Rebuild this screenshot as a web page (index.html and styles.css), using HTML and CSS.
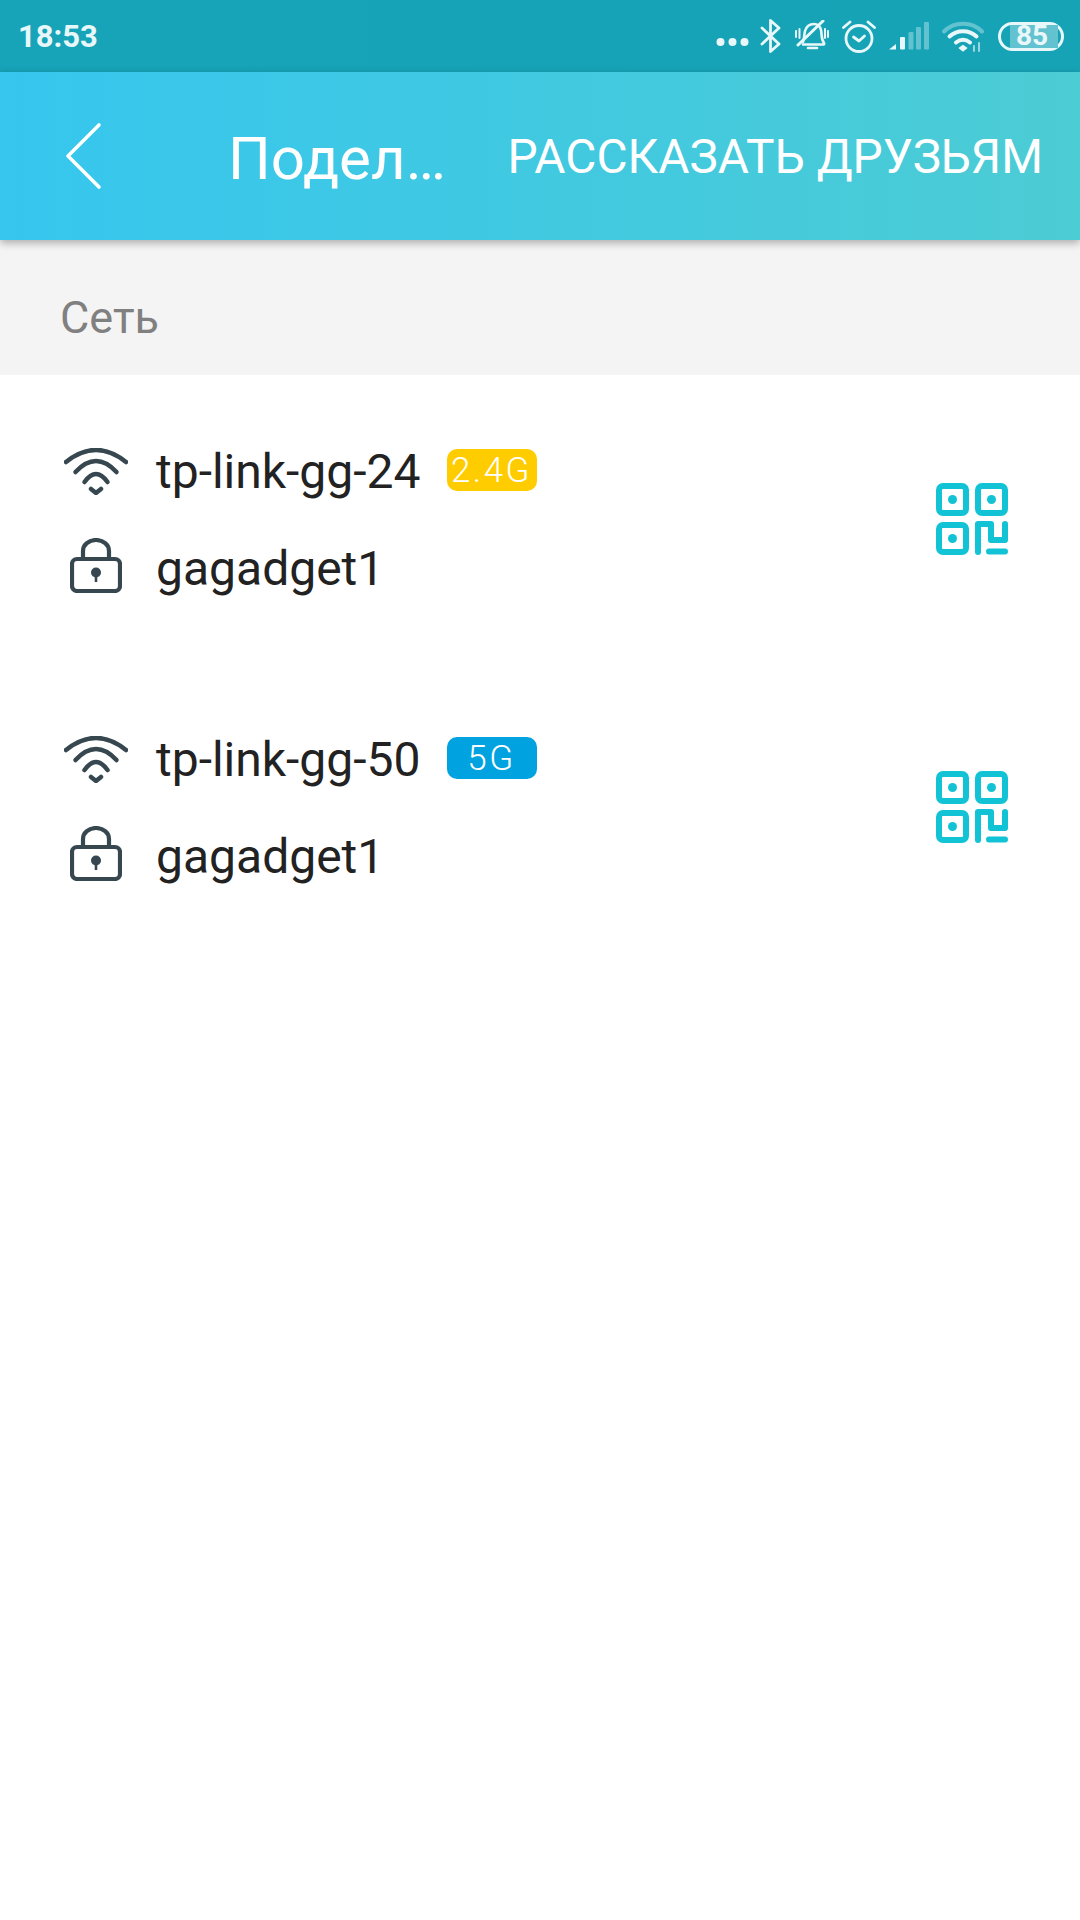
FILE: index.html
```html
<!DOCTYPE html>
<html lang="ru">
<head>
  <meta charset="UTF-8">
  <title>Поделиться</title>
  <link rel="stylesheet" href="styles.css">
</head>
<body>

<!-- Status bar -->
<div class="status-bar">
  <span class="clock">18:53</span>
  <div class="status-icons">
    <svg class="st-dots" width="33" height="10" viewBox="0 0 33 10"><circle cx="4.500" cy="5" r="4" fill="#e8f7f9"/><circle cx="16.500" cy="5" r="4" fill="#e8f7f9"/><circle cx="28.500" cy="5" r="4" fill="#e8f7f9"/></svg>
    <svg class="st-bt" width="21" height="34" viewBox="0 0 21 34" fill="none" stroke="#e8f7f9" stroke-width="2.800" stroke-linecap="round" stroke-linejoin="round"><path d="M2 9l17 16-8.500 7.500V1.500L19 9 2 25"/></svg>
    <svg class="st-bell" width="34" height="32" viewBox="0 0 34 32" fill="none" stroke="#e8f7f9" stroke-width="2.600" stroke-linecap="round"><path d="M8 22c1.500-3 1-7 2-11 1.500-5 5-7 9-7 3 0 6 2 7 6 1 5 0 9 3 13 .5 1 0 1.500-1 1.500H8"/><path d="M13 28h9"/><path d="M3 25L28 1" stroke-width="3"/><path d="M1 11v6M4.500 9v9M30 9v9M33 11v6" stroke-width="2"/></svg>
    <svg class="st-alarm" width="34" height="34" viewBox="0 0 34 34" fill="none" stroke="#e8f7f9" stroke-width="2.800" stroke-linecap="round" stroke-linejoin="round"><circle cx="17" cy="19.500" r="13"/><path d="M11.500 18l5.500 4 5.500-5"/><path d="M1.500 8.500L8 3M32.500 8.500L26 3"/></svg>
    <svg class="st-signal" width="40" height="28" viewBox="0 0 40 28"><path d="M0 27.500L7 22v5.500z" fill="#e8f7f9"/><rect x="11" y="15" width="5" height="12.500" rx="1" fill="#e8f7f9"/><rect x="19.500" y="10" width="5" height="17.500" rx="1" fill="#63c2d0"/><rect x="27" y="5" width="5" height="22.500" rx="1" fill="#63c2d0"/><rect x="35" y="0" width="5" height="27.500" rx="1" fill="#63c2d0"/></svg>
    <svg class="st-wifi" width="42" height="31" viewBox="0 0 42 31" fill="none" stroke-linecap="round"><path d="M2 10.500C12 0 30 0 40 10.500" stroke="#63c2d0" stroke-width="4"/><path d="M7.500 15.500c7.500-7 19.500-7 27 0" stroke="#e8f7f9" stroke-width="4"/><path d="M14 21.500c4.500-3.500 9.500-3.500 14 0" stroke="#e8f7f9" stroke-width="4"/><path d="M18 27l3-2 3 2-3 2.500z" fill="#e8f7f9" stroke="#e8f7f9" stroke-width="2"/><path d="M32 25v5M37 22v8" stroke="#9ad8e1" stroke-width="2"/></svg>
    <div class="battery"><div class="battery-fill"></div><span class="battery-num">85</span></div>
  </div>
</div>

<!-- Header -->
<div class="header">
  <svg class="back" width="38" height="68" viewBox="0 0 38 68" fill="none" stroke="#fff" stroke-width="3.600" stroke-linecap="round" stroke-linejoin="round"><path d="M34 3L3 34l31 31"/></svg>
  <div class="title">Подел…</div>
  <div class="action">РАССКАЗАТЬ ДРУЗЬЯМ</div>
</div>

<div class="section-label">Сеть</div>

<!-- Networks -->
<div class="network">
  <div class="net-info">
    <div class="net-line">
      <span class="net-icon">
        <svg class="icon-wifi" width="64" height="47" viewBox="0 0 64 47" fill="none" stroke="#37474f" stroke-width="4.500" stroke-linecap="round" stroke-linejoin="round"><path d="M2 14Q32 -10 62 14"/><path d="M11.500 24Q32 2 52.500 24"/><path d="M20.500 34Q32 18 43.500 34"/><path d="M27 41l5 4 5-4"/></svg>
      </span>
      <span class="net-name">tp-link-gg-24</span>
      <span class="badge badge-yellow">2.4G</span>
    </div>
    <div class="net-line">
      <span class="net-icon">
        <svg class="icon-lock" width="52" height="55" viewBox="0 0 52 55" fill="none" stroke="#37474f" stroke-width="4.200" stroke-linejoin="round"><path d="M13 21V13a13 11 0 0 1 26 0v8"/><rect x="2" y="21" width="48" height="32" rx="5"/><circle cx="26" cy="34.500" r="5" fill="#37474f" stroke="none"/><path d="M26 36v8" stroke-width="2.600"/></svg>
      </span>
      <span class="net-pass">gagadget1</span>
    </div>
  </div>
  <svg class="qr" width="74" height="74" viewBox="0 0 74 74" fill="none" stroke="#12c3d6" stroke-width="6" stroke-linecap="round" stroke-linejoin="round"><rect x="4" y="4" width="27" height="27" rx="4"/><rect x="43" y="4" width="27" height="27" rx="4"/><rect x="4" y="43" width="27" height="27" rx="4"/><circle cx="17.500" cy="17.500" r="4.500" fill="#12c3d6" stroke="none"/><circle cx="56.500" cy="17.500" r="4.500" fill="#12c3d6" stroke="none"/><circle cx="17.500" cy="56.500" r="4.500" fill="#12c3d6" stroke="none"/><path d="M43 70V42h13v16h14V42"/><path d="M54 69.500h16"/></svg>
</div>

<div class="network">
  <div class="net-info">
    <div class="net-line">
      <span class="net-icon">
        <svg class="icon-wifi" width="64" height="47" viewBox="0 0 64 47" fill="none" stroke="#37474f" stroke-width="4.500" stroke-linecap="round" stroke-linejoin="round"><path d="M2 14Q32 -10 62 14"/><path d="M11.500 24Q32 2 52.500 24"/><path d="M20.500 34Q32 18 43.500 34"/><path d="M27 41l5 4 5-4"/></svg>
      </span>
      <span class="net-name">tp-link-gg-50</span>
      <span class="badge badge-blue">5G</span>
    </div>
    <div class="net-line">
      <span class="net-icon">
        <svg class="icon-lock" width="52" height="55" viewBox="0 0 52 55" fill="none" stroke="#37474f" stroke-width="4.200" stroke-linejoin="round"><path d="M13 21V13a13 11 0 0 1 26 0v8"/><rect x="2" y="21" width="48" height="32" rx="5"/><circle cx="26" cy="34.500" r="5" fill="#37474f" stroke="none"/><path d="M26 36v8" stroke-width="2.600"/></svg>
      </span>
      <span class="net-pass">gagadget1</span>
    </div>
  </div>
  <svg class="qr" width="74" height="74" viewBox="0 0 74 74" fill="none" stroke="#12c3d6" stroke-width="6" stroke-linecap="round" stroke-linejoin="round"><rect x="4" y="4" width="27" height="27" rx="4"/><rect x="43" y="4" width="27" height="27" rx="4"/><rect x="4" y="43" width="27" height="27" rx="4"/><circle cx="17.500" cy="17.500" r="4.500" fill="#12c3d6" stroke="none"/><circle cx="56.500" cy="17.500" r="4.500" fill="#12c3d6" stroke="none"/><circle cx="17.500" cy="56.500" r="4.500" fill="#12c3d6" stroke="none"/><path d="M43 70V42h13v16h14V42"/><path d="M54 69.500h16"/></svg>
</div>

</body>
</html>
```

FILE: styles.css
```css
* {
  box-sizing: border-box;
}
body {
  font-family: Roboto, sans-serif;
  background: white;
  margin: 0;
  width: 1080px;
  height: 1920px;
  overflow: hidden;
}
.status-bar {
  height: 72px;
  background: linear-gradient(90deg, #17a3b8, #17a3b6);
  display: flex;
  align-items: center;
  justify-content: space-between;
  padding: 0 16px 0 18px;
}
.clock {
  color: #e8f7f9;
  font-size: 31px;
  font-weight: 700;
}
.status-icons {
  display: flex;
  align-items: center;
}
.status-icons svg {
  display: block;
  flex: none;
}
.st-dots { margin: 12px 11px 0 0; }
.st-bt { margin-right: 14px; }
.st-bell { margin-right: 13px; }
.st-alarm { margin-right: 13px; }
.st-signal { margin-right: 13px; }
.st-wifi { margin-right: 14px; }
.battery {
  position: relative;
  width: 66px;
  height: 29px;
  border: 3.500px solid #e8f7f9;
  border-radius: 15px;
}
.battery-fill {
  height: 100%;
  width: 48px;
  margin-left: 9px;
  background: #63c2d0;
}
.battery-num {
  position: absolute;
  top: -5px;
  left: 15px;
  color: #e8f7f9;
  font-size: 28px;
  font-weight: 700;
  line-height: 32px;
}
.header {
  height: 168px;
  background: linear-gradient(90deg, #36c6ee, #4cccd4);
  box-shadow: 0 3px 8px rgba(0,0,0,0.3);
  display: flex;
  align-items: center;
  padding-left: 65px;
  color: white;
  position: relative;
}
.title {
  font-size: 60px;
  margin-left: 125px;
  padding-top: 4px;
  white-space: nowrap;
}
.action {
  font-size: 47.800px;
  margin-left: auto;
  margin-right: 37px;
  padding-top: 2px;
  white-space: nowrap;
}
.section-label {
  height: 135px;
  background: #f4f4f4;
  color: #808080;
  font-size: 45px;
  display: flex;
  align-items: center;
  padding: 19px 0 0 60px;
}
.network {
  height: 288px;
  display: flex;
  align-items: center;
  justify-content: space-between;
  padding: 0 71px 0 61px;
}
.net-info {
  display: flex;
  flex-direction: column;
  gap: 35px;
}
.net-line {
  display: flex;
  align-items: center;
  height: 62px;
}
.net-icon {
  width: 70px;
  margin-right: 25px;
  display: flex;
  justify-content: center;
}
.icon-wifi {
  margin-top: 2px;
}
.icon-lock {
  margin-top: -4px;
}
.net-name, .net-pass {
  color: #222;
  font-size: 48px;
  padding-top: 2px;
}
.badge {
  color: white;
  font-size: 35px;
  font-weight: 300;
  letter-spacing: 2.500px;
  height: 42px;
  width: 90px;
  margin: -1px 0 0 26px;
  border-radius: 10px;
  display: flex;
  align-items: center;
  justify-content: center;
}
.badge-yellow {
  background: #ffcc00;
}
.badge-blue {
  background: #00a3e0;
}
```
